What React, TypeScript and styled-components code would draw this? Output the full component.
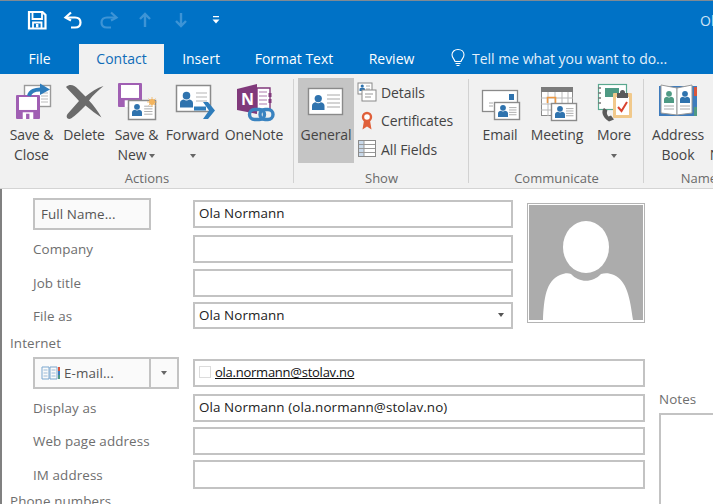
import React from "react";
import styled, { createGlobalStyle } from "styled-components";

const Global = createGlobalStyle`
  html, body { margin: 0; padding: 0; background: #fff; }
  body { font-family: "Open Sans", "Noto Sans", "Liberation Sans", sans-serif; }
`;

const Page = styled.div`
  width: 713px;
  height: 504px;
  overflow: hidden;
  display: flex;
  flex-direction: column;
  border-top: 1px solid #7f8a94;
  box-sizing: border-box;
`;

const Blue = styled.header`
  background: #0072c6;
  color: #fff;
  flex: none;
`;

const TitleRow = styled.div`
  height: 43px;
  box-sizing: border-box;
  padding: 0 0 5px 27px;
  display: flex;
  align-items: center;
  gap: 14px;
`;

const QatIcon = styled.svg<{ $ml?: number }>`
  display: block;
  flex: none;
  margin-left: ${(p) => p.$ml ?? 0}px;
`;

const WindowTitle = styled.div`
  margin-left: auto;
  width: 13px;
  white-space: nowrap;
  overflow: hidden;
  font-size: 14px;
  color: #cfe4f5;
`;

const TabRow = styled.nav`
  height: 30px;
  display: flex;
  align-items: stretch;
  font-size: 14px;
`;

const Tab = styled.div<{ $w: number; $active?: boolean }>`
  width: ${(p) => p.$w}px;
  flex: none;
  display: flex;
  align-items: center;
  justify-content: center;
  padding-bottom: 2px;
  box-sizing: border-box;
  background: ${(p) => (p.$active ? "#f1f1f1" : "transparent")};
  color: ${(p) => (p.$active ? "#0f6cb8" : "#fff")};
`;

const TellMe = styled.div`
  display: flex;
  align-items: center;
  gap: 6px;
  margin-left: 17px;
  padding-bottom: 2px;
  color: #e3f0fa;
  white-space: nowrap;
`;

const Ribbon = styled.section`
  height: 114px;
  flex: none;
  background: #f1f1f1;
  border-bottom: 1px solid #d4d4d4;
  display: flex;
  box-sizing: content-box;
  color: #444;
  font-size: 14px;
  letter-spacing: -0.1px;
`;

const Group = styled.div<{ $w: number; $pad: number }>`
  width: ${(p) => p.$w}px;
  flex: none;
  box-sizing: border-box;
  padding-left: ${(p) => p.$pad}px;
  height: 113px;
  display: flex;
  flex-direction: column;
  position: relative;
  &::after {
    content: "";
    position: absolute;
    right: 0;
    top: 5px;
    bottom: 4px;
    width: 1px;
    background: #d2d2d2;
  }
`;

const GroupBody = styled.div`
  height: 95px;
  display: flex;
  flex: none;
`;

const GroupLabel = styled.div<{ $shift?: number }>`
  text-align: center;
  font-size: 13px;
  line-height: 18px;
  color: #6a6a6a;
  letter-spacing: 0;
  margin-left: ${(p) => -(p.$shift ?? 0)}px;
`;

const Cmd = styled.div<{ $w: number; $on?: boolean }>`
  width: ${(p) => p.$w}px;
  flex: none;
  height: 85px;
  margin-top: 4px;
  display: flex;
  flex-direction: column;
  align-items: center;
  background: ${(p) => (p.$on ? "#c5c5c5" : "transparent")};
`;

const CmdIcon = styled.svg`
  display: block;
  width: 40px;
  height: 40px;
  margin-top: 4px;
  margin-bottom: 3px;
  overflow: visible;
  flex: none;
`;

const CmdLabel = styled.div`
  line-height: 20px;
  text-align: center;
  white-space: nowrap;
`;

const Caret = styled.span<{ $flush?: boolean }>`
  display: inline-block;
  width: 0;
  height: 0;
  border-left: 3px solid transparent;
  border-right: 3px solid transparent;
  border-top: 4px solid #666;
  vertical-align: 2px;
  margin-left: ${(p) => (p.$flush ? 0 : 3)}px;
`;

const SmallList = styled.div`
  display: flex;
  flex-direction: column;
  padding: 4px 0 0 3px;
  width: 110px;
  flex: none;
`;

const SmallItem = styled.div`
  height: 28.5px;
  display: flex;
  align-items: center;
  gap: 4px;
  white-space: nowrap;
`;

const SmallIcon = styled.svg`
  width: 20px;
  height: 20px;
  flex: none;
  display: block;
`;

const Form = styled.main`
  flex: 1;
  min-height: 0;
  display: flex;
  border-left: 2px solid #808080;
  background: #fff;
  font-size: 13.4px;
  letter-spacing: 0.1px;
  color: #222;
`;

const MainColumn = styled.div`
  width: 643px;
  flex: none;
  box-sizing: border-box;
  padding-top: 11px;
`;

const TopBlock = styled.div`
  display: flex;
  align-items: flex-start;
`;

const TopFields = styled.div`
  width: 511px;
  flex: none;
`;

const Row = styled.div<{ $h?: number; $mt?: number }>`
  height: ${(p) => p.$h ?? 28}px;
  margin-top: ${(p) => p.$mt ?? 0}px;
  display: flex;
  align-items: center;
`;

const LabelCell = styled.div`
  width: 191px;
  flex: none;
  box-sizing: border-box;
  padding-left: 31px;
  color: #6e6e6e;
  white-space: nowrap;
`;

const Field = styled.div<{ $ml?: number }>`
  flex: 1;
  min-width: 0;
  align-self: stretch;
  box-sizing: border-box;
  margin-left: ${(p) => p.$ml ?? 0}px;
  border: 2px solid #c3c3c3;
  padding: 0 4px 2px;
  display: flex;
  align-items: center;
  gap: 4px;
  white-space: nowrap;
  color: #222;
`;

const FieldArrow = styled.span`
  margin-left: auto;
  margin-right: 3px;
  width: 0;
  height: 0;
  border-left: 3px solid transparent;
  border-right: 3px solid transparent;
  border-top: 4px solid #555;
`;

const Push = styled.button`
  font: inherit;
  letter-spacing: inherit;
  color: #555;
  background: #fafafa;
  border: 2px solid #c3c3c3;
  height: 32px;
  box-sizing: border-box;
  padding: 0;
  text-align: left;
`;

const NameButton = styled(Push)`
  width: 118px;
  margin-left: 31px;
  padding-left: 6px;
`;

const EmailSplit = styled.div`
  width: 146px;
  margin-left: 31px;
  margin-right: 14px;
  flex: none;
  display: flex;
`;

const EmailMain = styled(Push)`
  width: 118px;
  display: flex;
  align-items: center;
  gap: 4px;
  padding-left: 6px;
`;

const EmailArrow = styled(Push)`
  flex: 1;
  border-left: none;
  display: flex;
  align-items: center;
  justify-content: center;
`;

const SectionLabel = styled.div<{ $mt: number }>`
  margin-top: ${(p) => p.$mt}px;
  padding-left: 8px;
  height: 18px;
  line-height: 18px;
  color: #6e6e6e;
  white-space: nowrap;
`;

const Photo = styled.svg`
  display: block;
  width: 118px;
  height: 120px;
  margin: 3px 0 0 14px;
  flex: none;
`;

const Check = styled.span`
  width: 12px;
  height: 12px;
  border: 1px solid #dcdcdc;
  box-sizing: border-box;
  flex: none;
`;

const MailLink = styled.span`
  color: #111;
  font-size: 13px;
  letter-spacing: -0.25px;
  text-decoration: underline;
`;

const NotesColumn = styled.div`
  flex: 1;
  padding: 201px 0 0 14px;
  min-width: 0;
`;

const NotesLabel = styled.div`
  color: #6e6e6e;
  height: 18px;
  line-height: 18px;
`;

const NotesBox = styled.div`
  margin-top: 5px;
  height: 120px;
  border: 2px solid #c3c3c3;
  border-right: none;
`;

const Person = ({ x, y, s = 1, c = "#2f73ae" }: { x: number; y: number; s?: number; c?: string }) => (
  <g transform={`translate(${x} ${y}) scale(${s})`} fill={c}>
    <circle cx="5" cy="2.8" r="2.9" />
    <path d="M0 12V8.5C0 6.8 1.6 6 3 5.8C4 6.8 6 6.8 7 5.8C8.4 6 10 6.8 10 8.5V12Z" />
  </g>
);

const Card = ({ x, y, w, h, sw = 1.5 }: { x: number; y: number; w: number; h: number; sw?: number }) => (
  <g>
    <rect x={x} y={y} width={w} height={h} fill="#fff" stroke="#8b8b8b" strokeWidth={sw} />
    <Person x={x + 3.5} y={y + h / 2 - 6} />
    <path
      d={`M${x + w * 0.58} ${y + h * 0.3}H${x + w - 3}M${x + w * 0.58} ${y + h * 0.44}H${x + w - 3}M${x + w * 0.58} ${y + h * 0.58}H${x + w - 3}M${x + w * 0.58} ${y + h * 0.72}H${x + w - 3}`}
      stroke="#b0b0b0"
      strokeWidth="1"
    />
  </g>
);

const Floppy = ({ x, y, s }: { x: number; y: number; s: number }) => (
  <g>
    <rect x={x} y={y} width={s} height={s} rx="1" fill="#a05fb3" />
    <rect x={x + 3} y={y + 2} width={s - 6} height={s * 0.54} fill="#fff" />
    <rect x={x + s * 0.28} y={y + s * 0.72} width={s * 0.44} height={s * 0.28} fill="#fff" />
    <rect x={x + s * 0.42} y={y + s * 0.78} width={s * 0.14} height={s * 0.22} fill="#a05fb3" />
  </g>
);

export default function App() {
  return (
    <Page>
      <Global />
      <Blue>
        <TitleRow>
          <QatIcon width="20" height="20" viewBox="0 0 20 20" fill="none">
            <path d="M2 2H15.5L18.5 5V18.5H2Z" stroke="#fff" strokeWidth="2.2" />
            <path d="M5.5 2.5V9H15V2.5" stroke="#fff" strokeWidth="1.8" />
            <path d="M6 18V12.5H14.5V18" stroke="#fff" strokeWidth="1.8" />
            <rect x="9" y="14" width="2.4" height="3.5" fill="#fff" />
          </QatIcon>
          <QatIcon $ml={2} width="20" height="20" viewBox="0 0 20 20" fill="none">
            <path d="M8 2.5L2.5 7.5L8 10.5" stroke="#fff" strokeWidth="2.2" />
            <path d="M3 7.5H12C15.5 7.5 17.5 9.5 17.5 12.5C17.5 15.5 15.5 17.5 12 17.5H8" stroke="#fff" strokeWidth="2.2" />
          </QatIcon>
          <QatIcon $ml={2} width="20" height="20" viewBox="0 0 20 20" fill="none">
            <path d="M12 2.5L17.5 7.5L12 10.5" stroke="#3d94d6" strokeWidth="2.2" />
            <path d="M17 7.5H8C4.5 7.5 2.5 9.5 2.5 12.5C2.5 15.5 4.5 17.5 8 17.5H12" stroke="#3d94d6" strokeWidth="2.2" />
          </QatIcon>
          <QatIcon $ml={5} width="14" height="16" viewBox="0 0 14 16" fill="none">
            <path d="M7 15V2M2 7L7 2L12 7" stroke="#3d94d6" strokeWidth="2.4" />
          </QatIcon>
          <QatIcon $ml={8} width="14" height="16" viewBox="0 0 14 16" fill="none">
            <path d="M7 1V14M2 9L7 14L12 9" stroke="#3d94d6" strokeWidth="2.4" />
          </QatIcon>
          <QatIcon $ml={10} width="8" height="10" viewBox="0 0 8 10">
            <path d="M1 1H7V2.2H1Z M0.5 4.5H7.5L4 8.5Z" fill="#fff" />
          </QatIcon>
          <WindowTitle>Ola Normann - Contact</WindowTitle>
        </TitleRow>
        <TabRow>
          <Tab $w={79}>File</Tab>
          <Tab $w={85} $active>Contact</Tab>
          <Tab $w={74}>Insert</Tab>
          <Tab $w={112}>Format Text</Tab>
          <Tab $w={83}>Review</Tab>
          <TellMe>
            <svg width="16" height="20" viewBox="0 0 16 20" fill="none">
              <path d="M5 13.5C4.5 11 2 10 2 6.8C2 3.8 4.5 1.5 8 1.5C11.5 1.5 14 3.8 14 6.8C14 10 11.5 11 11 13.5Z" stroke="#fff" strokeWidth="1.1" />
              <path d="M5.5 15.5H10.5M6.5 17.5H9.5" stroke="#fff" strokeWidth="1.1" />
            </svg>
            Tell me what you want to do...
          </TellMe>
        </TabRow>
      </Blue>

      <Ribbon>
        <Group $w={294} $pad={5}>
          <GroupBody>
            <Cmd $w={53}>
              <CmdIcon viewBox="0 0 40 40">
                <rect x="12.5" y="3.5" width="26" height="21" fill="#fff" stroke="#9a9a9a" strokeWidth="1.4" />
                <path d="M29 11H36M29 14H36M29 17H36M29 20H36" stroke="#bbb" />
                <Floppy x={4} y={13} s={24} />
                <path d="M17 14C18 9.5 23 7 30 7.5" fill="none" stroke="#2f7dbb" strokeWidth="4" />
                <path d="M28 1.5L38 7.5L28 13Z" fill="#2f7dbb" />
              </CmdIcon>
              <CmdLabel>Save &amp;<br />Close</CmdLabel>
            </Cmd>
            <Cmd $w={52}>
              <CmdIcon viewBox="0 0 40 40">
                <path d="M2 5C6 1.5 10 3 14 7L21.5 14.5C27 10 33 6 39.5 4C34 8.5 29 13 25 18.5C30 24 34 29 37.5 35.5C32 32 27 28 21.5 23.5C17 28 12 33 7 36.5C3.5 38 1.5 35 3.5 32L15 19C11 14 6 10 2 5Z" fill="#6b6b6b" />
              </CmdIcon>
              <CmdLabel>Delete</CmdLabel>
            </Cmd>
            <Cmd $w={53}>
              <CmdIcon viewBox="0 0 40 40">
                <Floppy x={1} y={1} s={24} />
                <Card x={11.5} y={18.5} w={27} h={19} />
                <circle cx="35" cy="20" r="3" fill="#f3b45e" />
                <path d="M35 15V25M30 20H40M31.5 16.5L38.5 23.5M38.5 16.5L31.5 23.5" stroke="#f3b45e" strokeWidth="0.8" />
              </CmdIcon>
              <CmdLabel>Save &amp;<br />New<Caret /></CmdLabel>
            </Cmd>
            <Cmd $w={59}>
              <CmdIcon viewBox="0 0 40 40">
                <rect x="3.5" y="3.5" width="34" height="26" fill="#fff" stroke="#8b8b8b" strokeWidth="1.5" />
                <Person x={7} y={10} s={1.3} />
                <path d="M23 11H34M23 15H34M23 19H34" stroke="#b5b5b5" />
                <path d="M21 26.5H33" stroke="#2f7dbb" strokeWidth="4" />
                <path d="M30 20L35 20L42 28.5L35 37H30L36 28.5Z" fill="#2f7dbb" />
              </CmdIcon>
              <CmdLabel>Forward<br /><Caret $flush /></CmdLabel>
            </Cmd>
            <Cmd $w={64}>
              <CmdIcon viewBox="0 0 40 40">
                <path d="M3 7L23 2V32L3 28Z" fill="#80397b" />
                <path d="M23 6H36V28H23Z" fill="#fff" stroke="#80397b" strokeWidth="1.4" />
                <path d="M25 10H33M25 14H33M25 18H33M25 22H33" stroke="#c9a6c7" strokeWidth="1.4" />
                <rect x="34.5" y="11" width="3" height="4" fill="#80397b" />
                <rect x="34.5" y="17" width="3" height="4" fill="#80397b" />
                <text x="7" y="23" fill="#fff" fontFamily="Open Sans, sans-serif" fontWeight="700" fontSize="16" letterSpacing="0">N</text>
                <rect x="15.5" y="27.5" width="15" height="10" rx="5" fill="none" stroke="#3a83c0" strokeWidth="3.4" />
                <rect x="26" y="27.5" width="13" height="10" rx="5" fill="none" stroke="#3a83c0" strokeWidth="3.4" />
              </CmdIcon>
              <CmdLabel>OneNote</CmdLabel>
            </Cmd>
          </GroupBody>
          <GroupLabel $shift={5}>Actions</GroupLabel>
        </Group>

        <Group $w={175} $pad={4}>
          <GroupBody>
            <Cmd $w={56} $on>
              <CmdIcon viewBox="0 0 40 40">
                <rect x="2.5" y="6.5" width="34" height="26" fill="#fff" stroke="#8a8a8a" strokeWidth="1.4" />
                <Person x={6} y={13} s={1.25} />
                <path d="M21 13H34M21 17H34M21 21H34M21 25H34" stroke="#a9a9a9" />
              </CmdIcon>
              <CmdLabel>General</CmdLabel>
            </Cmd>
            <SmallList>
              <SmallItem>
                <SmallIcon viewBox="0 0 20 20">
                  <rect x="1" y="1" width="14" height="11" fill="#fff" stroke="#8a8a8a" />
                  <Person x={2.5} y={2.5} s={0.55} />
                  <path d="M9 4H13M9 7H13" stroke="#aaa" />
                  <rect x="5" y="8" width="14" height="11" fill="#fff" stroke="#8a8a8a" />
                  <path d="M8 12H16M8 15H14" stroke="#999" />
                </SmallIcon>
                Details
              </SmallItem>
              <SmallItem>
                <SmallIcon viewBox="0 0 20 20">
                  <path d="M7 9.5L5.5 18.5L10 15.5L14.5 18.5L13 9.5Z" fill="#e0603a" />
                  <circle cx="10" cy="6" r="4" fill="#fff" stroke="#e0603a" strokeWidth="2.4" />
                </SmallIcon>
                Certificates
              </SmallItem>
              <SmallItem>
                <SmallIcon viewBox="0 0 20 20">
                  <rect x="1.5" y="1.5" width="17" height="16" fill="#fff" stroke="#8a8a8a" />
                  <rect x="2" y="2" width="5" height="15" fill="#c9d9ea" />
                  <path d="M2 5.5H18M2 9.5H18M2 13.5H18M7 2V17" stroke="#999" />
                </SmallIcon>
                All Fields
              </SmallItem>
            </SmallList>
          </GroupBody>
          <GroupLabel $shift={4}>Show</GroupLabel>
        </Group>

        <Group $w={175} $pad={2}>
          <GroupBody>
            <Cmd $w={58}>
              <CmdIcon viewBox="0 0 40 40">
                <rect x="2.5" y="8.5" width="35" height="21" fill="#fff" stroke="#8a8a8a" strokeWidth="1.3" />
                <rect x="29" y="12" width="5" height="6" fill="#2f73ae" />
                <path d="M9 21H13M9 24H13" stroke="#aaa" />
                <Card x={14.5} y={20.5} w={25} h={17} sw={1.4} />
              </CmdIcon>
              <CmdLabel>Email</CmdLabel>
            </Cmd>
            <Cmd $w={56}>
              <CmdIcon viewBox="0 0 40 40">
                <rect x="4.5" y="5.5" width="31" height="28" fill="#fff" stroke="#8a8a8a" />
                <rect x="4" y="5" width="32" height="5" fill="#7b7b7b" />
                <path d="M4 16H36M4 22H36M4 28H36M11 10V34M18 10V34M25 10V34M31 10V34" stroke="#b9b9b9" />
                <path d="M10.5 21V15.5H18.5V21" fill="none" stroke="#ed9a45" strokeWidth="1.6" />
                <Card x={14.5} y={21.5} w={25} h={17} sw={1.4} />
              </CmdIcon>
              <CmdLabel>Meeting</CmdLabel>
            </Cmd>
            <Cmd $w={58}>
              <CmdIcon viewBox="0 0 40 40">
                <rect x="4.5" y="2.5" width="28" height="25" fill="#fff" stroke="#5aa88f" strokeWidth="1.2" />
                <rect x="11" y="6" width="14" height="9" fill="#4f9a84" />
                <path d="M4 6H7M4 11H7M4 16H7M4 21H7" stroke="#777" strokeWidth="1.6" />
                <rect x="19" y="11" width="19" height="25" rx="1" fill="#f1c98b" />
                <rect x="22" y="15" width="13" height="18" fill="#fff" />
                <path d="M23 11H34V16H23Z" fill="#5a5a5a" />
                <circle cx="28.5" cy="10.5" r="2.5" fill="#5a5a5a" />
                <path d="M24 25L27.5 29L33 20" fill="none" stroke="#d9432f" strokeWidth="2" />
                <path d="M10 26C7 29 8 35 15 39.5L20 37.5L17 33.5L14.5 34.5C12.5 32.5 12.5 30 13.5 28.5Z" fill="#5a5a5a" />
              </CmdIcon>
              <CmdLabel>More<br /><Caret $flush /></CmdLabel>
            </Cmd>
          </GroupBody>
          <GroupLabel $shift={2}>Communicate</GroupLabel>
        </Group>

        <Group $w={116} $pad={0}>
          <GroupBody>
            <Cmd $w={68}>
              <CmdIcon viewBox="0 0 40 40">
                <path d="M1 4H39V34H1Z" fill="#3f7cbd" />
                <rect x="36" y="5" width="3" height="9" fill="#d9553c" />
                <rect x="36" y="15" width="3" height="9" fill="#3f7cbd" />
                <rect x="36" y="25" width="3" height="9" fill="#4f9a84" />
                <path d="M3 3L19 6V33L3 31Z" fill="#fff" stroke="#999" />
                <path d="M19 6L34 3V31L19 33Z" fill="#fff" stroke="#999" />
                <Person x={6} y={9} c="#4f9a84" />
                <Person x={22} y={9} />
                <path d="M6 24H16M6 27H16M22 24H32M22 27H32" stroke="#aaa" />
              </CmdIcon>
              <CmdLabel>Address<br />Book</CmdLabel>
            </Cmd>
            <Cmd $w={41}>
              <CmdIcon viewBox="0 0 40 40" />
              <CmdLabel>Check<br />Names</CmdLabel>
            </Cmd>
          </GroupBody>
          <GroupLabel>Names</GroupLabel>
        </Group>
      </Ribbon>

      <Form>
        <MainColumn>
          <TopBlock>
            <TopFields>
              <Row>
                <NameButton>Full Name...</NameButton>
                <Field $ml={42}>Ola Normann</Field>
              </Row>
              <Row $mt={7}>
                <LabelCell>Company</LabelCell>
                <Field />
              </Row>
              <Row $mt={6}>
                <LabelCell>Job title</LabelCell>
                <Field />
              </Row>
              <Row $mt={5} $h={27}>
                <LabelCell>File as</LabelCell>
                <Field>Ola Normann<FieldArrow /></Field>
              </Row>
            </TopFields>
            <Photo viewBox="0 0 118 120">
              <rect x="0" y="0" width="118" height="120" fill="#fff" stroke="#b4b4b4" strokeWidth="2" />
              <rect x="2" y="2" width="114" height="115" fill="#acacac" />
              <ellipse cx="59" cy="44" rx="23" ry="26" fill="#fff" />
              <path d="M16 117C17 95 19 78 33 72C38 70 41 70 44 71C52 80 66 80 74 71C78 70 82 70 87 72C100 78 103 95 106 117Z" fill="#fff" />
            </Photo>
          </TopBlock>
          <SectionLabel $mt={5}>Internet</SectionLabel>
          <Row $mt={7}>
            <EmailSplit>
              <EmailMain>
                <svg width="19" height="14" viewBox="0 0 19 14" fill="none">
                  <path d="M1 1H8V13H1ZM9 1H16V13H9Z" stroke="#7ba7cf" />
                  <path d="M2.5 4H6.5M2.5 7H6.5M2.5 10H6.5M10.5 4H14.5M10.5 7H14.5M10.5 10H14.5" stroke="#9dbcd8" />
                  <rect x="17" y="1" width="2" height="4" fill="#d9553c" />
                  <rect x="17" y="5" width="2" height="4" fill="#3f7cbd" />
                  <rect x="17" y="9" width="2" height="4" fill="#4f9a84" />
                </svg>
                E-mail...
              </EmailMain>
              <EmailArrow><Caret $flush /></EmailArrow>
            </EmailSplit>
            <Field>
              <Check />
              <MailLink>ola.normann@stolav.no</MailLink>
            </Field>
          </Row>
          <Row $mt={7}>
            <LabelCell>Display as</LabelCell>
            <Field>Ola Normann (ola.normann@stolav.no)</Field>
          </Row>
          <Row $mt={5}>
            <LabelCell>Web page address</LabelCell>
            <Field />
          </Row>
          <Row $mt={5} $h={29}>
            <LabelCell>IM address</LabelCell>
            <Field />
          </Row>
          <SectionLabel $mt={3}>Phone numbers</SectionLabel>
        </MainColumn>
        <NotesColumn>
          <NotesLabel>Notes</NotesLabel>
          <NotesBox />
        </NotesColumn>
      </Form>
    </Page>
  );
}
